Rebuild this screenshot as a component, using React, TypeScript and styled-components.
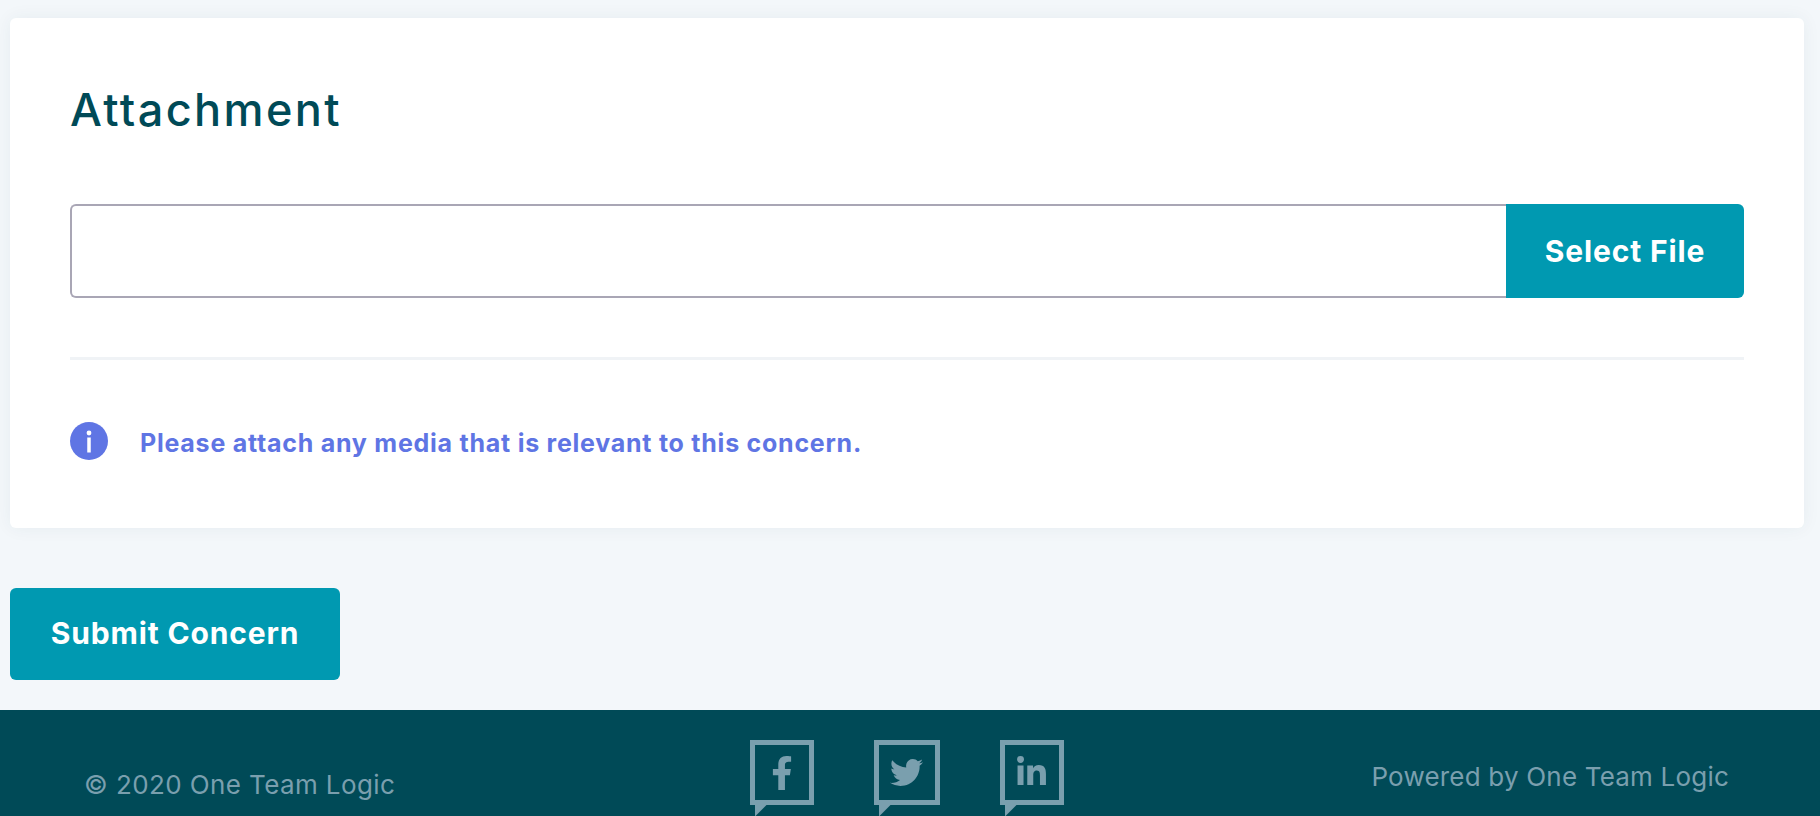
import React from "react";
import styled, { createGlobalStyle } from "styled-components";
import { FaFacebookF, FaLinkedinIn, FaTwitter } from "react-icons/fa";

const GlobalStyle = createGlobalStyle`
  html, body {
    margin: 0;
    padding: 0;
    height: 100%;
    overflow: hidden;
    background: #f3f7fa;
    font-family: "Inter", "Liberation Sans", sans-serif;
  }
  * { box-sizing: border-box; }
`;

const Page = styled.div`
  height: 816px;
  display: flex;
  flex-direction: column;
  overflow: hidden;
`;

const Main = styled.main`
  flex: 1;
  padding: 18px 16px 0 10px;
`;

const Card = styled.section`
  height: 510px;
  background: #fff;
  border-radius: 6px;
  box-shadow: 0 0 18px rgba(0, 60, 90, 0.06);
  padding: 67px 60px 0;
`;

const Title = styled.h2`
  margin: 0;
  height: 57px;
  font-size: 45px;
  line-height: 50px;
  font-weight: 500;
  letter-spacing: 2.4px;
  color: #004a57;
`;

const FileRow = styled.div`
  margin-top: 62px;
  height: 94px;
  display: flex;
`;

const FileInput = styled.div`
  flex: 1;
  border: 2px solid #a9a6b5;
  border-right: 0;
  border-radius: 6px 0 0 6px;
`;

const Button = styled.button<{ $width: number; $radius: string }>`
  width: ${p => p.$width}px;
  height: ${p => (p.$width > 300 ? 92 : 94)}px;
  padding: 0 0 ${p => (p.$width > 300 ? 3 : 0)}px;
  border: 0;
  border-radius: ${p => p.$radius};
  background: #0099b1;
  color: #fff;
  font-family: inherit;
  font-size: 30px;
  font-weight: 700;
  letter-spacing: 0.85px;
`;

const Divider = styled.hr`
  margin: 59px 0 0;
  height: 3px;
  border: 0;
  background: #f0f3f6;
`;

const Notice = styled.div`
  margin-top: 62px;
  display: flex;
  align-items: center;
  gap: 32px;
  color: #5f75e4;
  font-size: 25px;
  font-weight: 700;
  letter-spacing: 0.75px;
`;

const NoticeText = styled.span`
  padding-top: 4px;
`;

const InfoIcon = styled.svg`
  width: 38px;
  height: 38px;
  flex: none;
`;

const Actions = styled.div`
  margin-top: 60px;
`;

const Footer = styled.footer`
  height: 106px;
  flex: none;
  background: #004a57;
  color: #7a9fae;
  display: grid;
  grid-template-columns: 1fr auto 1fr;
  padding: 30px 91px 0 84px;
  font-size: 26px;
`;

const Copyright = styled.div`
  padding-top: 30px;
  line-height: 30px;
  letter-spacing: 0.4px;
`;

const Powered = styled.div`
  text-align: right;
  padding-top: 22px;
  line-height: 30px;
  letter-spacing: 0.2px;
`;

const Socials = styled.div`
  display: flex;
  gap: 60px;
`;

const Bubble = styled.a<{ $width: number }>`
  position: relative;
  width: ${p => p.$width}px;
  height: 65px;
  border: 5px solid #7a9fae;
  display: flex;
  align-items: center;
  justify-content: center;
  color: #7a9fae;

  &::after {
    content: "";
    position: absolute;
    left: 0;
    top: 60px;
    width: 12px;
    height: 12px;
    background: #7a9fae;
    clip-path: polygon(0 0, 100% 0, 0 100%);
  }
`;

export default function App() {
  return (
    <Page>
      <GlobalStyle />
      <Main>
        <Card>
          <Title>Attachment</Title>
          <FileRow>
            <FileInput />
            <Button type="button" $width={238} $radius="0 6px 6px 0">
              Select File
            </Button>
          </FileRow>
          <Divider />
          <Notice>
            <InfoIcon viewBox="0 0 38 38">
              <circle cx="19" cy="19" r="19" fill="#5f75e4" />
              <circle cx="19" cy="11" r="2.4" fill="#fff" />
              <rect x="17.25" y="15.5" width="3.5" height="15" fill="#fff" />
            </InfoIcon>
            <NoticeText>Please attach any media that is relevant to this concern.</NoticeText>
          </Notice>
        </Card>
        <Actions>
          <Button type="button" $width={330} $radius="6px">
            Submit Concern
          </Button>
        </Actions>
      </Main>
      <Footer>
        <Copyright>© 2020 One Team Logic</Copyright>
        <Socials>
          <Bubble $width={64}>
            <FaFacebookF size={34} />
          </Bubble>
          <Bubble $width={66}>
            <FaTwitter size={33} />
          </Bubble>
          <Bubble $width={64}>
            <FaLinkedinIn size={33} />
          </Bubble>
        </Socials>
        <Powered>Powered by One Team Logic</Powered>
      </Footer>
    </Page>
  );
}
